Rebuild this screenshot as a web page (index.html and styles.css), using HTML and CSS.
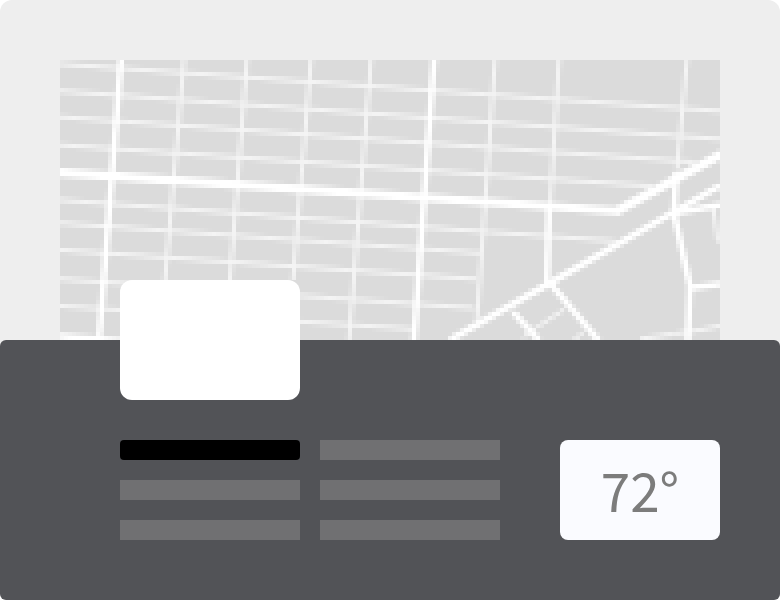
FILE: index.html
```html
<!DOCTYPE html>
<html lang="en">
<head>
<meta charset="utf-8">
<title>Local weather</title>
<link rel="stylesheet" href="styles.css">
</head>
<body>
<main class="widget">
  <canvas class="map" id="map" width="165" height="70"></canvas>
  <section class="panel">
    <div class="photo"></div>
    <div class="details">
      <div class="lines">
        <div class="line line-title"></div>
        <div class="line"></div>
        <div class="line"></div>
        <div class="line"></div>
        <div class="line"></div>
        <div class="line"></div>
      </div>
      <div class="temperature">72°</div>
    </div>
  </section>
</main>
<script src="map.js"></script>
</body>
</html>
```
FILE: styles.css
```css
* {
  box-sizing: border-box;
}

body {
  margin: 0;
  background: #fff;
  font-family: "Noto Sans CJK SC", "Noto Sans", sans-serif;
}

.widget {
  display: flex;
  flex-direction: column;
  min-height: 100vh;
  padding-top: 60px;
  background: #eee;
  border-radius: 12px;
}

.map {
  display: block;
  width: calc(100% - 120px);
  margin: 0 60px;
  image-rendering: pixelated;
}

.panel {
  flex: 1;
  padding: 0 60px 60px 120px;
  background: #525357;
  border-radius: 6px;
}

.photo {
  position: relative;
  width: 180px;
  height: 120px;
  margin-top: -60px;
  background: #fff;
  border-radius: 12px;
}

.details {
  display: flex;
  justify-content: space-between;
  gap: 60px;
  margin-top: 40px;
}

.lines {
  display: grid;
  flex: 1;
  grid-template-columns: 1fr 1fr;
  gap: 20px;
}

.line {
  height: 20px;
  background: #707072;
}

.line-title {
  background: #000;
  border-radius: 4px;
}

.temperature {
  width: 160px;
  height: 100px;
  background: #fafbff;
  border-radius: 8px;
  color: #7c7c7c;
  font-size: 53px;
  line-height: 98px;
  text-align: center;
}
```
FILE: map.js
```js
const ctx = document.getElementById("map").getContext("2d");
ctx.fillStyle = "#dbdbdb";
ctx.fillRect(0, 0, 165, 70);
// Street coordinates are in map units, four to a canvas pixel.
ctx.scale(0.25, 0.25);

function street(points, width, color) {
  ctx.beginPath();
  for (let i = 0; i < points.length; i += 2) {
    ctx.lineTo(points[i], points[i + 1]);
  }
  ctx.lineWidth = width;
  ctx.strokeStyle = color;
  ctx.lineJoin = "round";
  ctx.stroke();
}

const minor = [
  [0, 4, 660, 51],
  [0, 31, 660, 79],
  [0, 57, 635, 102],
  [0, 85, 592, 126],
  [0, 140, 430, 172, 555, 181],
  [0, 163, 420, 193],
  [0, 190, 416, 219],
  [0, 219, 414, 248],
  [0, 246, 354, 269],
  [124, 0, 105, 220],
  [187, 0, 170, 220],
  [251, 0, 233, 220],
  [311, 0, 289, 280],
  [435, 0, 417, 260],
  [499, 0, 490, 148],
  [627, 0, 617, 110],
  [653, 146, 658, 182],
  [580, 279, 613, 274, 640, 270, 660, 266],
  [463, 277, 477, 267, 505, 249],
  [513, 280, 523, 273]
];
minor.forEach(p => street(p, 4, "#f4f4f4"));

const major = [
  [61, 0, 50, 140, 39, 280],
  [374, 0, 354, 280],
  [0, 276, 64, 281],
  [489, 146, 487, 224],
  [616, 112, 614, 153, 630, 226, 628, 280],
  [390, 280, 490, 223, 660, 126],
  [614, 153, 660, 145],
  [630, 228, 660, 224],
  [490, 223, 539, 281],
  [453, 252, 479, 280]
];
major.forEach(p => street(p, 6, "#fff"));

street([-4, 112, 557, 151, 664, 93], 9, "#fff");
```
